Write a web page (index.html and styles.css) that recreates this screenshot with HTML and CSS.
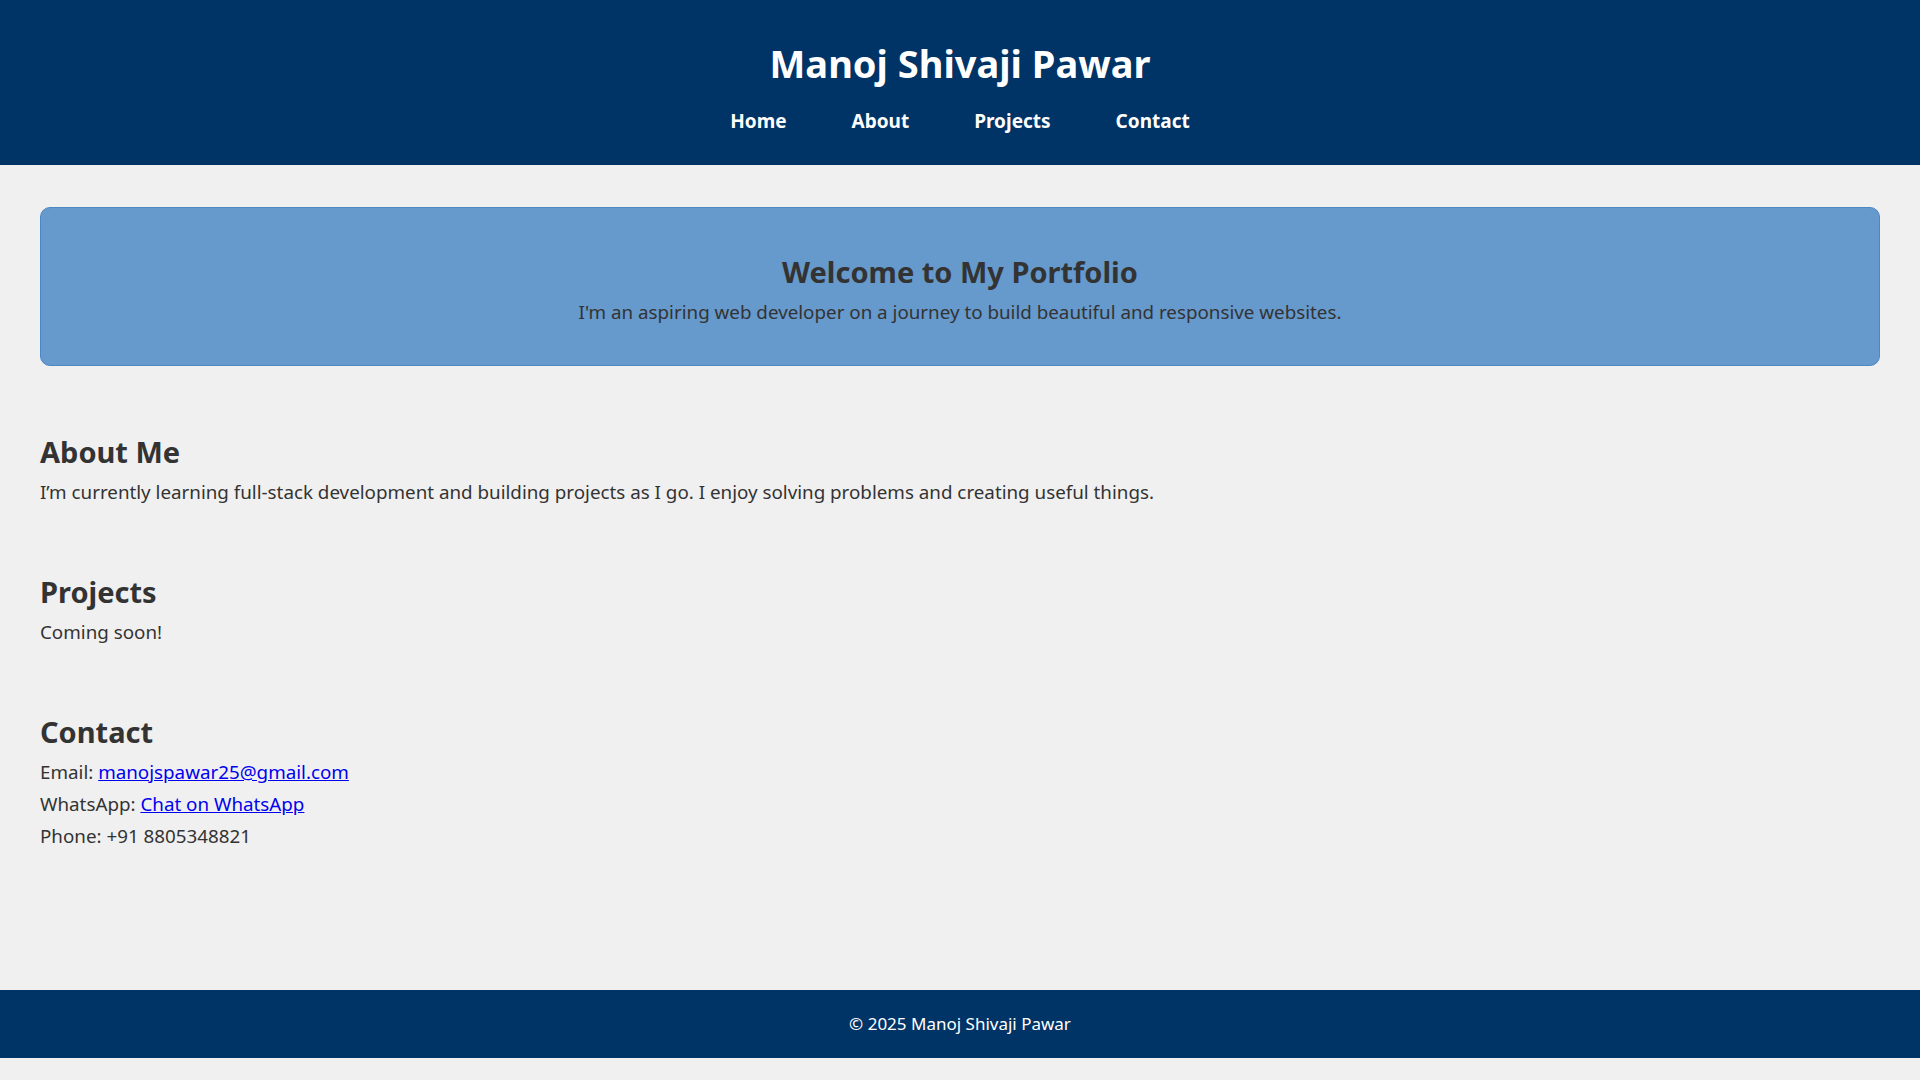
FILE: index.html
```html
<!DOCTYPE html>
<html lang="en">
<head>
<meta charset="utf-8">
<title>Manoj Shivaji Pawar</title>
<link rel="stylesheet" href="styles.css">
</head>
<body>
<header class="site-header">
  <h1 class="site-title">Manoj Shivaji Pawar</h1>
  <nav class="site-nav">
    <a href="#home">Home</a>
    <a href="#about">About</a>
    <a href="#projects">Projects</a>
    <a href="#contact">Contact</a>
  </nav>
</header>
<main class="content">
  <section class="hero" id="home">
    <h2 class="hero-title">Welcome to My Portfolio</h2>
    <p class="hero-text">I'm an aspiring web developer on a journey to build beautiful and responsive websites.</p>
  </section>
  <section class="block" id="about">
    <h2 class="block-title">About Me</h2>
    <p class="block-text">I’m currently learning full-stack development and building projects as I go. I enjoy solving problems and creating useful things.</p>
  </section>
  <section class="block" id="projects">
    <h2 class="block-title">Projects</h2>
    <p class="block-text">Coming soon!</p>
  </section>
  <section class="block" id="contact">
    <h2 class="block-title">Contact</h2>
    <p class="block-text">Email: <a href="mailto:manojspawar25@gmail.com">manojspawar25@gmail.com</a><br>
    WhatsApp: <a href="#contact">Chat on WhatsApp</a><br>
    Phone: +91 8805348821</p>
  </section>
</main>
<footer class="site-footer">
  <p>© 2025 Manoj Shivaji Pawar</p>
</footer>
</body>
</html>
```
FILE: styles.css
```css
* { box-sizing: border-box; }

body {
  margin: 0;
  background: #f0f0f0;
  color: #333333;
  font-family: "Noto Sans", "Open Sans", sans-serif;
  font-size: 18.8px;
  line-height: 32px;
}

.site-header {
  background: #003366;
  color: #ffffff;
  text-align: center;
  padding: 39px 0 32px;
  height: 165px;
}

.site-title {
  margin: 0;
  font-size: 38px;
  line-height: 48px;
  font-weight: 700;
}

.site-nav {
  display: flex;
  justify-content: center;
  gap: 65px;
  margin-top: 22px;
  line-height: 24px;
}

.site-nav a {
  color: #ffffff;
  text-decoration: none;
  font-weight: 700;
  font-size: 19px;
}

.content {
  padding: 42px 40px 138px;
}

.hero {
  background: #6699cc;
  border: 1px solid #4d87c4;
  border-radius: 10px;
  text-align: center;
  padding: 40px 20px 37px;
}

.hero-title,
.block-title {
  margin: 0;
  font-size: 29px;
  line-height: 48px;
  font-weight: 700;
}

.hero-text,
.block-text {
  margin: 0;
}

.block {
  margin-top: 60px;
}

.hero + .block {
  margin-top: 62px;
}

.block-text a {
  color: #0000ee;
  text-decoration: underline;
}

.site-footer {
  background: #003366;
  color: #ffffff;
  text-align: center;
  height: 68px;
  display: flex;
  align-items: center;
  justify-content: center;
  margin-bottom: 22px;
}

.site-footer p {
  margin: 0;
  font-size: 17px;
  line-height: 24px;
}
```
